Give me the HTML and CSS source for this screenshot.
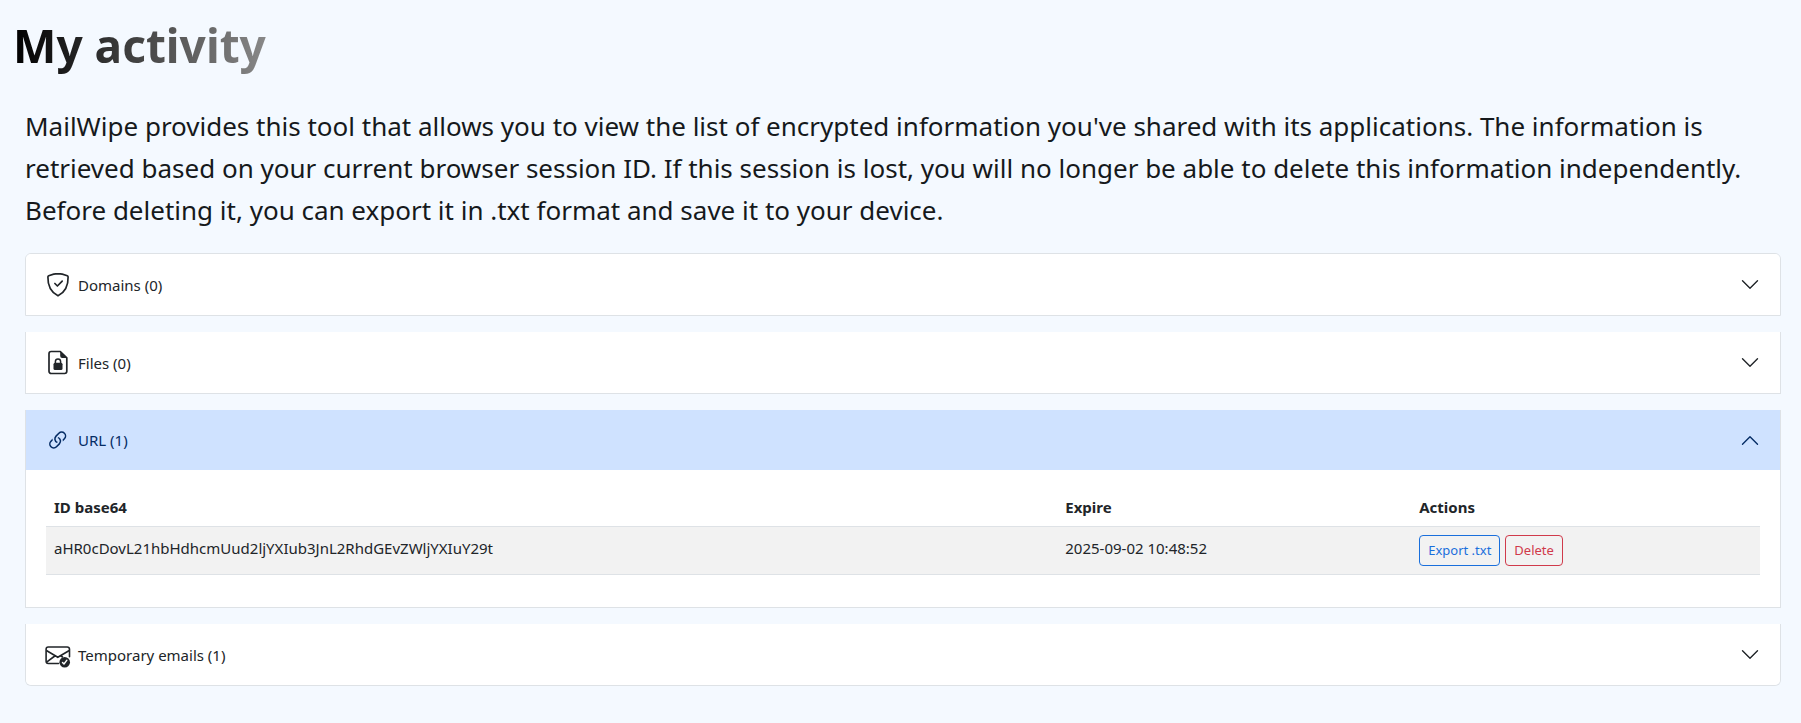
FILE: index.html
```html
<!DOCTYPE html>
<html lang="en">
<head>
<meta charset="utf-8">
<meta name="viewport" content="width=device-width, initial-scale=1">
<title>My activity</title>
<link rel="stylesheet" href="styles.css">
</head>
<body>
<main class="page">
  <h1 class="title">My activity</h1>
  <div class="content">
    <p class="intro">MailWipe provides this tool that allows you to view the list of encrypted information you've shared with its applications. The information is retrieved based on your current browser session ID. If this session is lost, you will no longer be able to delete this information independently. Before deleting it, you can export it in .txt format and save it to your device.</p>
    <div class="accordion">
      <section class="item">
        <button class="toggle" type="button" aria-expanded="false">
          <svg class="icon" viewBox="0 0 24 24" fill="none" stroke="currentColor" stroke-width="1.7" stroke-linecap="round" stroke-linejoin="round" aria-hidden="true"><path d="M12 1.2C9.2 1.2 5 2.4 2.7 3.3c-.5.2-.8.6-.8 1.100C1.700 12.200 4.500 19.400 12 23.300c7.500-3.900 10.300-11.100 10.100-18.900 0-.5-.3-.9-.8-1.100C19 2.400 14.800 1.200 12 1.200Z"/><path d="m8.900 11 2.500 2.500 4.800-4.800"/></svg>
          <span>Domains (0)</span>
          <svg class="chevron" viewBox="0 0 20 20" fill="none" stroke="currentColor" stroke-width="1.4" stroke-linecap="round" stroke-linejoin="round" aria-hidden="true"><path d="m2.500 5.800 7.500 7.500 7.500-7.500"/></svg>
        </button>
      </section>
      <section class="item">
        <button class="toggle" type="button" aria-expanded="false">
          <svg class="icon" viewBox="0 0 24 24" fill="none" aria-hidden="true"><path d="M14.300 1H5.200A2.200 2.200 0 0 0 3 3.200v17.600A2.200 2.200 0 0 0 5.200 23h13.400a2.200 2.200 0 0 0 2.200-2.200V7.300Z" stroke="currentColor" stroke-width="1.700" stroke-linejoin="round"/><path d="M14.200 1v4.500a2 2 0 0 0 2 2h4.900Z" fill="currentColor"/><path d="M9.400 12.500v-1.400a2.600 2.600 0 0 1 5.200 0v1.400" stroke="currentColor" stroke-width="1.500"/><rect x="7.500" y="12.300" width="9" height="7.200" rx="1.500" fill="currentColor"/></svg>
          <span>Files (0)</span>
          <svg class="chevron" viewBox="0 0 20 20" fill="none" stroke="currentColor" stroke-width="1.4" stroke-linecap="round" stroke-linejoin="round" aria-hidden="true"><path d="m2.500 5.800 7.500 7.500 7.500-7.500"/></svg>
        </button>
      </section>
      <section class="item">
        <button class="toggle toggle-open" type="button" aria-expanded="true" aria-controls="url-panel">
          <svg class="icon icon-link" viewBox="0.500 -0.200 15.400 15.400" fill="currentColor" aria-hidden="true"><path d="M4.715 6.542 3.343 7.914a3 3 0 1 0 4.243 4.243l1.828-1.829A3 3 0 0 0 8.586 5.500L8 6.086a1 1 0 0 0-.154.199 2 2 0 0 1 .861 3.337L6.880 11.450a2 2 0 1 1-2.830-2.830l.793-.792a4 4 0 0 1-.128-1.287z"/><path d="M6.586 4.672A3 3 0 0 0 7.414 9.500l.775-.776a2 2 0 0 1-.896-3.346L9.120 3.550a2 2 0 1 1 2.830 2.830l-.793.792c.112.420.155.855.128 1.287l1.372-1.372a3 3 0 1 0-4.243-4.243z"/></svg>
          <span>URL (1)</span>
          <svg class="chevron" viewBox="0 0 20 20" fill="none" stroke="currentColor" stroke-width="1.4" stroke-linecap="round" stroke-linejoin="round" aria-hidden="true"><path d="m2.500 5.800 7.500 7.500 7.500-7.500"/></svg>
        </button>
        <div class="panel" id="url-panel">
          <table class="table">
            <thead>
              <tr><th class="col-id" scope="col">ID base64</th><th class="col-expire" scope="col">Expire</th><th scope="col">Actions</th></tr>
            </thead>
            <tbody>
              <tr>
                <td>aHR0cDovL21hbHdhcmUud2ljYXIub3JnL2RhdGEvZWljYXIuY29t</td>
                <td>2025-09-02 10:48:52</td>
                <td class="cell-actions"><div class="actions"><button class="btn btn-primary" type="button">Export .txt</button><button class="btn btn-danger" type="button">Delete</button></div></td>
              </tr>
            </tbody>
          </table>
        </div>
      </section>
      <section class="item">
        <button class="toggle" type="button" aria-expanded="false">
          <svg class="icon" viewBox="0 0 24 24" fill="none" aria-hidden="true"><path d="M12.500 21H2.300A2.200 2.200 0 0 1 .1 18.800V6.700a2.200 2.200 0 0 1 2.200-2.200h19a2.200 2.200 0 0 1 2.200 2.200v7.600" stroke="currentColor" stroke-width="1.600" stroke-linecap="round"/><path d="m.4 8 11.400 6.800L23.300 8M.6 19.700l8.200-6.200M14.800 13.500l2.200 1.300" stroke="currentColor" stroke-width="1.600"/><circle cx="18.700" cy="19.700" r="5.300" fill="currentColor"/><path d="m16.500 19.900 1.500 1.600 2.900-3.800" stroke="#fff" stroke-width="1.400" stroke-linecap="round" stroke-linejoin="round"/></svg>
          <span>Temporary emails (1)</span>
          <svg class="chevron" viewBox="0 0 20 20" fill="none" stroke="currentColor" stroke-width="1.4" stroke-linecap="round" stroke-linejoin="round" aria-hidden="true"><path d="m2.500 5.800 7.500 7.500 7.500-7.500"/></svg>
        </button>
      </section>
    </div>
  </div>
</main>
</body>
</html>
```
FILE: styles.css
```css
* {
  box-sizing: border-box;
}

body {
  margin: 0;
  background: #f4f9ff;
  color: #212529;
  font-family: "Noto Sans", "Open Sans", sans-serif;
  font-size: 15px;
  line-height: 24px;
}

.page {
  padding: 16px 20px 36px 13px;
}

.title {
  width: fit-content;
  margin: 0;
  background: linear-gradient(90deg, #000, #888);
  background-clip: text;
  -webkit-background-clip: text;
  color: transparent;
  font-size: 46px;
  font-weight: 700;
  line-height: 58px;
}

.content {
  padding: 31px 0 0 12px;
}

.intro {
  margin: 0 0 22px;
  color: #16191c;
  font-size: 26px;
  line-height: 42px;
}

.accordion {
  display: flex;
  flex-direction: column;
  gap: 16px;
}

.item {
  overflow: hidden;
  border: 1px solid #dee2e6;
  border-top: 0;
  background: #fff;
}

.item:first-child {
  border-top: 1px solid #dee2e6;
  border-radius: 6px 6px 0 0;
}

.item:last-child {
  border-radius: 0 0 6px 6px;
}

.toggle {
  display: flex;
  align-items: center;
  gap: 8px;
  width: 100%;
  padding: 18px 20px;
  border: 0;
  background: #fff;
  color: #212529;
  font: inherit;
  text-align: left;
  cursor: pointer;
}

.toggle-open {
  background: #cfe2ff;
  color: #052c65;
}

.icon {
  flex: none;
  width: 24px;
  height: 25px;
  overflow: visible;
}

.icon-link {
  height: 24px;
}

.chevron {
  flex: none;
  width: 20px;
  height: 20px;
  margin-left: auto;
}

.toggle-open .chevron {
  transform: rotate(180deg);
}

.panel {
  padding: 16px 20px 32px;
}

.table {
  width: 100%;
  border-collapse: separate;
  border-spacing: 0;
  table-layout: fixed;
}

.table th,
.table td {
  padding: 9px 8px 7px;
  border-bottom: 1px solid #dee2e6;
  text-align: left;
  vertical-align: top;
}

.table th {
  font-weight: 700;
}

.table td {
  background: #f2f2f2;
}

.table .cell-actions {
  padding: 8px;
}

.col-id {
  width: 59%;
}

.col-expire {
  width: 20.65%;
}

.actions {
  display: flex;
  gap: 5px;
}

.btn {
  padding: 4px 8px;
  border: 1px solid;
  border-radius: 4px;
  background: transparent;
  font: inherit;
  font-size: 13px;
  line-height: 21px;
  cursor: pointer;
}

.btn-primary {
  color: #1a6fdc;
}

.btn-danger {
  color: #d03a4b;
}
```
